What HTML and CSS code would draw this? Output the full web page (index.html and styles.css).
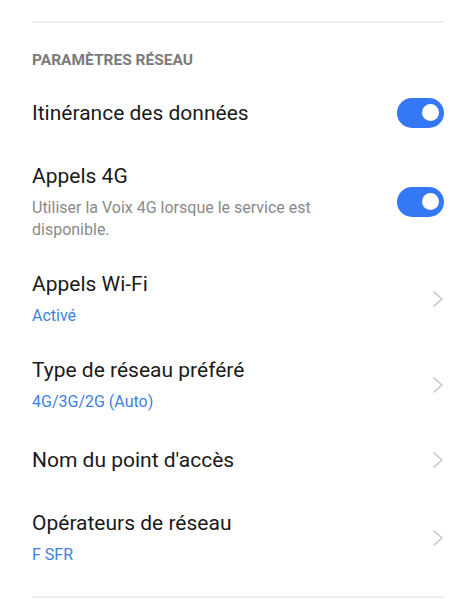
FILE: index.html
```html
<!DOCTYPE html>
<html lang="fr">
  <head>
    <meta charset="UTF-8">
    <meta name="viewport" content="width=device-width, initial-scale=1.0">
    <title>Paramètres réseau</title>
    <link rel="stylesheet" href="styles.css">
  </head>
  <body>
    <div class="container">
        <div class="divider"></div>

        <p class="section-title">PARAMÈTRES RÉSEAU</p>

        <div class="row single">
            <div class="row-text">
                <p class="row-title">Itinérance des données</p>
            </div>
            <div class="switch on"><span class="knob"></span></div>
        </div>

        <div class="row">
            <div class="row-text">
                <p class="row-title">Appels 4G</p>
                <p class="row-sub">Utiliser la Voix 4G lorsque le service est disponible.</p>
            </div>
            <div class="switch on"><span class="knob"></span></div>
        </div>

        <div class="row">
            <div class="row-text">
                <p class="row-title">Appels Wi-Fi</p>
                <p class="row-sub blue">Activé</p>
            </div>
            <svg class="chevron" width="12" height="18" viewBox="0 0 12 18"><polyline points="2,2 10,9 2,16" /></svg>
        </div>

        <div class="row">
            <div class="row-text">
                <p class="row-title">Type de réseau préféré</p>
                <p class="row-sub blue">4G/3G/2G (Auto)</p>
            </div>
            <svg class="chevron" width="12" height="18" viewBox="0 0 12 18"><polyline points="2,2 10,9 2,16" /></svg>
        </div>

        <div class="row single">
            <div class="row-text">
                <p class="row-title">Nom du point d'accès</p>
            </div>
            <svg class="chevron" width="12" height="18" viewBox="0 0 12 18"><polyline points="2,2 10,9 2,16" /></svg>
        </div>

        <div class="row">
            <div class="row-text">
                <p class="row-title">Opérateurs de réseau</p>
                <p class="row-sub blue">F SFR</p>
            </div>
            <svg class="chevron" width="12" height="18" viewBox="0 0 12 18"><polyline points="2,2 10,9 2,16" /></svg>
        </div>

        <div class="divider bottom"></div>
    </div>
  </body>
</html>
```

FILE: styles.css
```css
body {
    margin: 0;
    background-color: white;
    font-family: Roboto, "Liberation Sans", sans-serif;
    color: #1a1a1a;
}

p {
    margin: 0;
}

.container {
    padding: 21px 32px 0 32px;
}

.divider {
    height: 2px;
    background-color: #efefef;
}

.divider.bottom {
    margin-top: 17px;
}

.section-title {
    font-size: 15.5px;
    font-weight: bold;
    color: #7b7b7b;
    line-height: 20px;
    margin-top: 27px;
    margin-bottom: 9px;
}

.row {
    display: flex;
    align-items: center;
    justify-content: space-between;
    padding: 16px 0 13px 0;
}

.row.single {
    padding: 16px 0;
    min-height: 35px;
}

.row-text {
    flex: 1;
    padding-right: 60px;
}

.row-title {
    font-size: 21px;
    line-height: 28px;
}

.row-sub {
    font-size: 16px;
    line-height: 22px;
    color: #8a8a8a;
    margin-top: 7px;
}

.row-sub.blue {
    color: #3f7fe0;
}

.switch {
    width: 47px;
    height: 30px;
    border-radius: 15px;
    background-color: #3478f6;
    display: flex;
    align-items: center;
    justify-content: flex-end;
    padding-right: 5px;
    box-sizing: border-box;
    flex-shrink: 0;
}

.knob {
    width: 17px;
    height: 17px;
    border-radius: 50%;
    background-color: white;
}

.chevron {
    flex-shrink: 0;
}

.chevron polyline {
    fill: none;
    stroke: #c6c6c6;
    stroke-width: 1.6;
    stroke-linecap: round;
    stroke-linejoin: round;
}
```
